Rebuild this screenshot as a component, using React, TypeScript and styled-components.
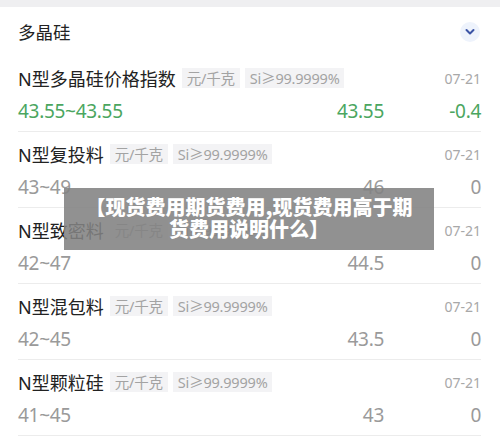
import React from 'react'
import styled, { createGlobalStyle } from 'styled-components'

const Global = createGlobalStyle`
  html, body { margin: 0; padding: 0; background: #fff; }
  body { font-family: "Noto Sans", "Noto Sans CJK SC", sans-serif; }
`

interface Item {
  name: string
  range: string
  price: string
  change: string
  up?: boolean
}

const items: Item[] = [
  { name: 'N型多晶硅价格指数', range: '43.55~43.55', price: '43.55', change: '-0.4', up: true },
  { name: 'N型复投料', range: '43~49', price: '46', change: '0' },
  { name: 'N型致密料', range: '42~47', price: '44.5', change: '0' },
  { name: 'N型混包料', range: '42~45', price: '43.5', change: '0' },
  { name: 'N型颗粒硅', range: '41~45', price: '43', change: '0' },
]

export default function App() {
  return (
    <Page>
      <Global />
      <TopBand />
      <Card>
        <Header>
          <Title>多晶硅</Title>
          <Toggle>
            <svg width="12" height="8" viewBox="0 0 12 8">
              <path d="M2.5 2 L6 5.5 L9.5 2" fill="none" stroke="#3b54a6" strokeWidth="2" strokeLinecap="round" strokeLinejoin="round" />
            </svg>
          </Toggle>
        </Header>
        {items.map(it => (
          <Row key={it.name}>
            <NameLine>
              <Name>{it.name}</Name>
              <Tag>元/千克</Tag>
              <Tag>Si≥99.9999%</Tag>
              <Date>07-21</Date>
            </NameLine>
            <Values $up={it.up}>
              <span>{it.range}</span>
              <Num>{it.price}</Num>
              <Num>{it.change}</Num>
            </Values>
          </Row>
        ))}
      </Card>
      <Banner>【现货费用期货费用,现货费用高于期货费用说明什么】</Banner>
    </Page>
  )
}

const Page = styled.div`
  position: relative;
  width: 500px;
  height: 439px;
  overflow: hidden;
  background: #fff;
`

const TopBand = styled.div`
  height: 7px;
  background: #efeff1;
`

const Card = styled.div`
  padding: 0 19px 0 18px;
`

const Header = styled.div`
  display: flex;
  align-items: center;
  justify-content: space-between;
  height: 49px;
`

const Title = styled.div`
  font-size: 17.5px;
  color: #222;
`

const Toggle = styled.div`
  width: 20px;
  height: 20px;
  border-radius: 50%;
  background: #eef3fc;
  display: flex;
  align-items: center;
  justify-content: center;
  margin-right: 1px;
`

const Row = styled.div`
  height: 75px;
  border-bottom: 1px solid #ececec;
  display: flex;
  flex-direction: column;
`

const NameLine = styled.div`
  display: flex;
  align-items: center;
  height: 40px;
  padding-top: 2px;
`

const Name = styled.div`
  font-size: 18px;
  color: #222;
  margin-right: 6px;
`

const Tag = styled.div`
  font-size: 14.5px;
  color: #a3a3a3;
  background: #f3f3f5;
  height: 20px;
  line-height: 20px;
  padding: 0 5px;
  margin-right: 5px;
  letter-spacing: -0.2px;
`

const Date = styled.div`
  margin-left: auto;
  font-size: 14px;
  color: #a8a8a8;
`

const Values = styled.div<{ $up?: boolean }>`
  display: grid;
  grid-template-columns: 1fr auto 97px;
  align-items: center;
  height: 24px;
  font-size: 19px;
  letter-spacing: -0.3px;
  color: ${p => (p.$up ? '#4ba65f' : '#9a9a9a')};
`

const Num = styled.span`
  text-align: right;
`

const Banner = styled.div`
  position: absolute;
  left: 64px;
  top: 188px;
  width: 370px;
  height: 62px;
  box-sizing: border-box;
  padding: 8px 12px 0;
  background: rgba(130, 130, 130, 0.88);
  color: #fff;
  font-family: "Noto Sans CJK SC", sans-serif;
  font-weight: 900;
  font-size: 20px;
  line-height: 22px;
  text-align: center;
`
